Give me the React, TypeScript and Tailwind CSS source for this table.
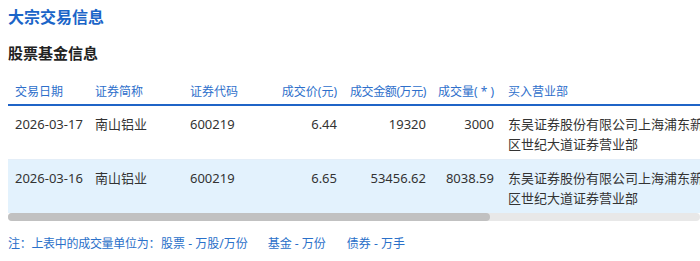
import React from "react";

type Row = {
  date: string;
  name: string;
  code: string;
  price: string;
  amount: string;
  volume: string;
  buyer: string;
  seller: string;
};

const rows: Row[] = [
  {
    date: "2026-03-17",
    name: "南山铝业",
    code: "600219",
    price: "6.44",
    amount: "19320",
    volume: "3000",
    buyer: "东吴证券股份有限公司上海浦东新区世纪大道证券营业部",
    seller: "机构专用",
  },
  {
    date: "2026-03-16",
    name: "南山铝业",
    code: "600219",
    price: "6.65",
    amount: "53456.62",
    volume: "8038.59",
    buyer: "东吴证券股份有限公司上海浦东新区世纪大道证券营业部",
    seller: "机构专用",
  },
];

export default function App() {
  return (
    <div className="w-[700px] h-[261px] overflow-hidden bg-white px-2 pt-[6px] font-['Noto_Sans','Noto_Sans_CJK_SC',sans-serif]">
      <h1 className="text-[16px] font-bold leading-[22px] text-[#1b65c8]">大宗交易信息</h1>
      <h2 className="mt-[14px] text-[15px] font-bold leading-[22px] text-[#222222]">股票基金信息</h2>

      <div className="mt-[10px] w-[692px] overflow-hidden">
        <table className="table-fixed w-[985px] border-collapse">
          <colgroup>
            <col className="w-[80px]" />
            <col className="w-[95px]" />
            <col className="w-[67px]" />
            <col className="w-[94px]" />
            <col className="w-[89px]" />
            <col className="w-[68px]" />
            <col className="w-[214px]" />
            <col className="w-[278px]" />
          </colgroup>
          <thead>
            <tr className="border-b-2 border-[#1f64c7] text-[12px] leading-[20px] text-[#2e6fcb]">
              <th className="pl-[7px] pt-[8px] pb-[2px] text-left font-normal whitespace-nowrap">交易日期</th>
              <th className="pl-[7px] pt-[8px] pb-[2px] text-left font-normal whitespace-nowrap">证券简称</th>
              <th className="pl-[7px] pt-[8px] pb-[2px] text-left font-normal whitespace-nowrap">证券代码</th>
              <th className="pr-[7px] pt-[8px] pb-[2px] text-right font-normal whitespace-nowrap">成交价(元)</th>
              <th className="pr-[7px] pt-[8px] pb-[2px] text-right font-normal whitespace-nowrap tracking-[-0.4px]">成交金额(万元)</th>
              <th className="pr-[7px] pt-[8px] pb-[2px] text-right font-normal whitespace-nowrap">成交量( * )</th>
              <th className="pl-[7px] pt-[8px] pb-[2px] text-left font-normal whitespace-nowrap">买入营业部</th>
              <th className="pl-[7px] pt-[8px] pb-[2px] text-left font-normal whitespace-nowrap">卖出营业部</th>
            </tr>
          </thead>
          <tbody>
            {rows.map((r, i) => (
              <tr
                key={r.date}
                className={
                  i === 0
                    ? "border-b border-[#e4eef8] text-[13px] leading-[20px] text-[#333333] align-top"
                    : "bg-[#e3f2fd] text-[13px] leading-[20px] text-[#333333] align-top"
                }
              >
                <td className="pl-[7px] pt-[8px] pb-[5px] whitespace-nowrap">{r.date}</td>
                <td className="pl-[7px] pt-[8px] pb-[5px] whitespace-nowrap">{r.name}</td>
                <td className="pl-[7px] pt-[8px] pb-[5px] whitespace-nowrap">{r.code}</td>
                <td className="pr-[7px] pt-[8px] pb-[5px] text-right whitespace-nowrap">{r.price}</td>
                <td className="pr-[7px] pt-[8px] pb-[5px] text-right whitespace-nowrap">{r.amount}</td>
                <td className="pr-[7px] pt-[8px] pb-[5px] text-right whitespace-nowrap">{r.volume}</td>
                <td className="px-[7px] pt-[8px] pb-[5px]">{r.buyer}</td>
                <td className="px-[7px] pt-[8px] pb-[5px]">{r.seller}</td>
              </tr>
            ))}
          </tbody>
        </table>
        <div className="h-[8px] w-full rounded-full bg-[#e8e8e8]">
          <div className="h-full w-[482px] rounded-full bg-[#c1c1c1]" />
        </div>
      </div>

      <div className="mt-[13px] flex text-[12px] leading-[20px] text-[#2a70c9] whitespace-nowrap">
        <span className="tracking-[-0.3px]">注：上表中的成交量单位为：</span>
        <span className="ml-[1px]">股票 - 万股/万份</span>
        <span className="ml-[20px]">基金 - 万份</span>
        <span className="ml-[21px]">债券 - 万手</span>
      </div>
    </div>
  );
}
